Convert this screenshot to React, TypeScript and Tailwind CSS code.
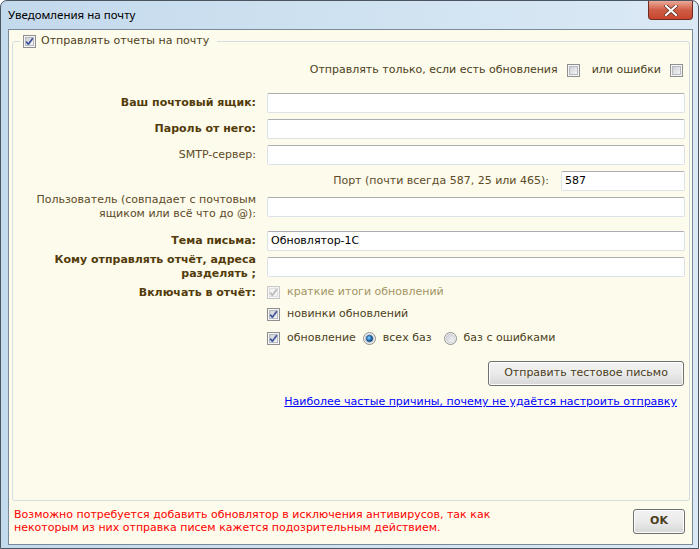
import React from 'react';

// Win7-style checkbox
function CheckBox({ checked = false, disabled = false }: { checked?: boolean; disabled?: boolean }) {
  return (
    <svg width="13" height="13" viewBox="0 0 13 13" className="shrink-0">
      <defs>
        <linearGradient id="cbg" x1="0" y1="0" x2="1" y2="1">
          <stop offset="0" stopColor="#cbcfd5" />
          <stop offset="1" stopColor="#f6f6f6" />
        </linearGradient>
      </defs>
      <rect x="0.5" y="0.5" width="12" height="12" fill="#f5f5f5" stroke={disabled ? '#c9c9c9' : '#8f8f8f'} />
      <rect x="2.5" y="2.5" width="8" height="8" fill={disabled ? '#f4f4f4' : 'url(#cbg)'} stroke={disabled ? '#e0e0e0' : '#b7bbc1'} />
      {checked && (
        <path
          d="M3.2 6.6 L5.4 9.2 L9.8 3.2"
          fill="none"
          stroke={disabled ? '#b9b9b9' : '#40539a'}
          strokeWidth="1.7"
          strokeLinejoin="round"
        />
      )}
    </svg>
  );
}

function Radio({ checked = false }: { checked?: boolean }) {
  return (
    <svg width="13" height="13" viewBox="0 0 13 13" className="shrink-0">
      <defs>
        <linearGradient id="rbg" x1="0" y1="0" x2="1" y2="1">
          <stop offset="0" stopColor="#c8ccd2" />
          <stop offset="1" stopColor="#fafafa" />
        </linearGradient>
        <radialGradient id="rdot" cx="0.4" cy="0.4" r="0.6">
          <stop offset="0" stopColor="#8fd8ff" />
          <stop offset="0.55" stopColor="#2a84c8" />
          <stop offset="1" stopColor="#0f3f78" />
        </radialGradient>
      </defs>
      <circle cx="6.5" cy="6.5" r="6" fill="#f4f4f4" stroke="#8f8f8f" />
      <circle cx="6.5" cy="6.5" r="4.3" fill="url(#rbg)" stroke="#c3c6cb" strokeWidth="0.8" />
      {checked && <circle cx="6.5" cy="6.5" r="3.2" fill="url(#rdot)" stroke="#17406f" strokeWidth="0.6" />}
    </svg>
  );
}

function TextBox({ value = '', className = '' }: { value?: string; className?: string }) {
  return (
    <div
      className={`h-[20px] rounded-[2px] border border-[#dde2e8] border-t-[#abadb3] bg-white px-[3px] text-[11px] leading-[18px] text-black ${className}`}
    >
      {value}
    </div>
  );
}

function Row({ label, bold = false, children }: { label: React.ReactNode; bold?: boolean; children: React.ReactNode }) {
  return (
    <div className="flex h-[20px] items-center gap-[11px]">
      <div
        className={`w-[233px] shrink-0 text-right leading-[14px] ${bold ? 'font-bold text-[#533b0b]' : 'text-[#5c4a28]'}`}
      >
        {label}
      </div>
      <div className="flex-1">{children}</div>
    </div>
  );
}

export default function App() {
  return (
    <div className="h-[549px] w-[700px] overflow-hidden bg-white font-['DejaVu_Sans',sans-serif] text-[11px]">
      <div className="flex h-[549px] w-[699px] flex-col rounded-t-[7px] border border-[#4b5560] bg-gradient-to-r from-[#c3d9ec] via-[#cfe2f1] to-[#dbe9f5]">
        {/* Title bar */}
        <div className="flex h-[28px] shrink-0 items-start justify-between">
          <div className="pl-[7px] pt-[6px] font-['Noto_Sans',sans-serif] text-[11.5px] leading-[16px] text-black">
            Уведомления на почту
          </div>
          <div className="mr-[5px] flex h-[19px] w-[45px] items-center justify-center rounded-b-[4px] border border-t-0 border-[#6e2b22] bg-gradient-to-b from-[#e9a998] via-[#cf5c45] to-[#c8452e]">
            <svg width="14" height="11" viewBox="0 0 14 11">
              <path d="M2 1 L12 10 M12 1 L2 10" stroke="#5a2a22" strokeWidth="3.6" strokeLinecap="square" />
              <path d="M2 1 L12 10 M12 1 L2 10" stroke="#ffffff" strokeWidth="2.2" strokeLinecap="square" />
            </svg>
          </div>
        </div>

        {/* Client area */}
        <div className="ml-[7px] flex h-[516px] w-[685px] flex-col border border-[#7a8a99] bg-[#fdfbeb]">
          <fieldset className="ml-[3px] mr-[2px] mt-[4px] h-[467px] rounded-[3px] border border-[#d3dde4]">
            <legend className="ml-[7px] flex items-center gap-[5px] pl-[3px] pr-[8px] leading-[14px] text-[#4e3f1c]">
              <CheckBox checked />
              <span>Отправлять отчеты на почту</span>
            </legend>

            <div className="pl-[10px] pr-[4px]">
              <div className="mt-[16px] flex h-[13px] items-center justify-end gap-[9px] pr-[2px] text-[#4c3f22]">
                <span>Отправлять только, если есть обновления</span>
                <CheckBox />
                <span className="ml-[3px]">или ошибки</span>
                <CheckBox />
              </div>

              <div className="mt-[16px] flex flex-col gap-[6px]">
                <Row label="Ваш почтовый ящик:" bold>
                  <TextBox />
                </Row>
                <Row label="Пароль от него:" bold>
                  <TextBox />
                </Row>
                <Row label="SMTP-сервер:">
                  <TextBox />
                </Row>
                <div className="flex h-[20px] items-center justify-end gap-[12px]">
                  <span className="text-[#5c4a28]">Порт (почти всегда 587, 25 или 465):</span>
                  <TextBox value="587" className="w-[124px]" />
                </div>
                <Row
                  label={
                    <>
                      Пользователь (совпадает с почтовым
                      <br />
                      ящиком или всё что до @):
                    </>
                  }
                >
                  <TextBox />
                </Row>
              </div>

              <div className="mt-[14px] flex flex-col gap-[6px]">
                <Row label="Тема письма:" bold>
                  <TextBox value="Обновлятор-1С" />
                </Row>
                <Row
                  bold
                  label={
                    <>
                      Кому отправлять отчёт, адреса
                      <br />
                      разделять ;
                    </>
                  }
                >
                  <TextBox />
                </Row>
              </div>

              <div className="mt-[9px] flex gap-[11px]">
                <div className="w-[233px] shrink-0 text-right font-bold leading-[13px] text-[#533b0b]">
                  Включать в отчёт:
                </div>
                <div className="flex flex-col">
                  <div className="flex h-[13px] items-center gap-[7px]">
                    <CheckBox checked disabled />
                    <span className="text-[#a39565]">краткие итоги обновлений</span>
                  </div>
                  <div className="mt-[9px] flex h-[13px] items-center gap-[7px] text-[#4c3f22]">
                    <CheckBox checked />
                    <span>новинки обновлений</span>
                  </div>
                  <div className="mt-[11px] flex h-[13px] items-center gap-[7px] text-[#4c3f22]">
                    <CheckBox checked />
                    <span>обновление</span>
                    <Radio checked />
                    <span>всех баз</span>
                    <span className="ml-[5px]">
                      <Radio />
                    </span>
                    <span>баз с ошибками</span>
                  </div>
                </div>
              </div>

              <div className="mt-[16px] flex justify-end pr-[1px]">
                <button className="flex h-[25px] w-[196px] items-center justify-center rounded-[3px] border border-[#707070] bg-gradient-to-b from-[#f2f2f2] via-[#ebebeb] to-[#d6d6d6] text-[#4a3d20] shadow-[inset_0_0_0_1px_#fcfcfc]">
                  Отправить тестовое письмо
                </button>
              </div>

              <div className="mt-[9px] flex justify-end pr-[8px] leading-[14px]">
                <a className="text-[#0000ff] underline">Наиболее частые причины, почему не удаётся настроить отправку</a>
              </div>
            </div>
          </fieldset>

          <div className="flex flex-1 items-start justify-between pl-[5px] pr-[7px] pt-[7px]">
            <div className="leading-[13px] text-[#ff0000]">
              Возможно потребуется добавить обновлятор в исключения антивирусов, так как
              <br />
              некоторым из них отправка писем кажется подозрительным действием.
            </div>
            <button className="mt-[1px] flex h-[25px] w-[52px] items-center justify-center rounded-[3px] border border-[#707070] bg-gradient-to-b from-[#f2f2f2] via-[#ebebeb] to-[#d6d6d6] font-bold text-[#4a3d20] shadow-[inset_0_0_0_1px_#fcfcfc]">
              OK
            </button>
          </div>
        </div>
      </div>
    </div>
  );
}
